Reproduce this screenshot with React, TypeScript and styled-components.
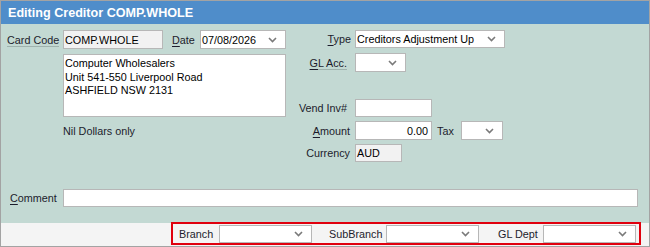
import React from 'react';
import styled, { createGlobalStyle } from 'styled-components';

const GlobalStyle = createGlobalStyle`
  html, body {
    margin: 0;
    padding: 0;
    background: #ffffff;
  }
  body {
    font-family: "Liberation Sans", Arial, sans-serif;
    font-size: 10.8px;
    color: #1b1b1b;
  }
`;

const Window = styled.div`
  width: 650px;
  height: 247px;
  box-sizing: border-box;
  border: 1px solid #a3a3a3;
  display: flex;
  flex-direction: column;
  overflow: hidden;
`;

const TitleBar = styled.div`
  height: 23px;
  flex: none;
  background: #4f8dca;
  color: #ffffff;
  font-weight: bold;
  font-size: 12.6px;
  display: flex;
  align-items: center;
  padding-left: 7px;
  padding-top: 1px;
  box-sizing: border-box;
`;

const Body = styled.div`
  height: 199px;
  flex: none;
  background: #c3d9d3;
  padding: 6px 0 0 5px;
  box-sizing: border-box;
  display: flex;
  flex-direction: column;
`;

const TopSection = styled.div`
  display: flex;
`;

const LeftColumn = styled.div`
  width: 280px;
  display: flex;
  flex-direction: column;
`;

const RightColumn = styled.div`
  margin-left: 11px;
  display: flex;
  flex-direction: column;
`;

interface RowProps {
  top?: number;
}

const Row = styled.div<RowProps>`
  display: flex;
  align-items: center;
  margin-top: ${(p) => p.top ?? 0}px;
`;

interface LabelProps {
  width?: number;
  right?: boolean;
  pad?: number;
  padRight?: number;
}

const Label = styled.span<LabelProps>`
  width: ${(p) => (p.width ? p.width + 'px' : 'auto')};
  flex: none;
  text-align: ${(p) => (p.right ? 'right' : 'left')};
  padding-left: ${(p) => p.pad ?? 0}px;
  padding-right: ${(p) => p.padRight ?? 0}px;
  box-sizing: border-box;
  white-space: nowrap;
  color: #1c1c2c;
  line-height: 14px;
`;

const LinkText = styled.span`
  border-bottom: 1px solid #9fb2ad;
`;

const Mnemonic = styled.u`
  text-decoration-thickness: 1px;
  text-underline-offset: 2px;
`;

interface BoxProps {
  w: number;
  h?: number;
  readOnly?: boolean;
  align?: 'left' | 'right';
}

const Box = styled.div<BoxProps>`
  width: ${(p) => p.w}px;
  height: ${(p) => p.h ?? 19}px;
  flex: none;
  box-sizing: border-box;
  border: 1px solid #b7b7b7;
  background: ${(p) => (p.readOnly ? '#f2f2f2' : '#ffffff')};
  display: flex;
  align-items: center;
  justify-content: ${(p) => (p.align === 'right' ? 'flex-end' : 'flex-start')};
  padding: 0 3px 0 1px;
  color: #000000;
  white-space: nowrap;
  overflow: hidden;
`;

const SelectBox = styled(Box)`
  justify-content: space-between;
  padding-right: 8px;
`;

const Memo = styled.div`
  margin-left: 57px;
  margin-top: 5px;
  width: 223px;
  height: 63px;
  box-sizing: border-box;
  border: 1px solid #b7b7b7;
  background: #ffffff;
  padding: 2px 1px;
  line-height: 13.5px;
  color: #000000;
`;

const AmountWords = styled.div`
  margin-left: 57px;
  margin-top: 7px;
  line-height: 14px;
  color: #1c1c2c;
`;

const CommentRow = styled(Row)`
  margin-top: 27px;
  padding-left: 4px;
`;

const Footer = styled.div`
  height: 23px;
  flex: none;
  background: #f4f4f4;
  display: flex;
  justify-content: flex-end;
  padding-right: 8px;
`;

const Highlight = styled.div`
  margin-top: -1px;
  height: 23px;
  box-sizing: border-box;
  border: 2px solid #e0000e;
  display: flex;
  align-items: center;
  padding: 0 3px 0 6px;
`;

const Chevron = () => (
  <svg width="9" height="6" viewBox="0 0 9 6" style={{ flex: 'none' }}>
    <polyline points="1,1 4.5,4.5 8,1" fill="none" stroke="#7a7a7a" strokeWidth="1.6" />
  </svg>
);

const Select: React.FC<{ w: number; h?: number; value?: string }> = ({ w, h, value }) => (
  <SelectBox w={w} h={h}>
    <span>{value ?? ''}</span>
    <Chevron />
  </SelectBox>
);

const App: React.FC = () => {
  return (
    <>
      <GlobalStyle />
      <Window>
        <TitleBar>Editing Creditor COMP.WHOLE</TitleBar>
        <Body>
          <TopSection>
            <LeftColumn>
              <Row>
                <Label width={57} pad={1}>
                  <LinkText>Card Code</LinkText>
                </Label>
                <Box w={100} readOnly>COMP.WHOLE</Box>
                <Label width={37} pad={9}>
                  <Mnemonic>D</Mnemonic>ate
                </Label>
                <Select w={86} value="07/08/2026" />
              </Row>
              <Memo>
                Computer Wholesalers
                <br />
                Unit 541-550 Liverpool Road
                <br />
                ASHFIELD NSW 2131
              </Memo>
              <AmountWords>Nil Dollars only</AmountWords>
            </LeftColumn>
            <RightColumn>
              <Row>
                <Label width={58} right padRight={4}>
                  <Mnemonic>T</Mnemonic>ype
                </Label>
                <Select w={150} h={18} value="Creditors Adjustment Up" />
              </Row>
              <Row top={5}>
                <Label width={58} right padRight={8}>
                  <LinkText>
                    <Mnemonic>G</Mnemonic>L Acc.
                  </LinkText>
                </Label>
                <Select w={51} />
              </Row>
              <Row top={27}>
                <Label width={58} right padRight={8}>
                  Vend Inv#
                </Label>
                <Box w={77} h={18} />
              </Row>
              <Row top={4}>
                <Label width={58} right padRight={5}>
                  <Mnemonic>A</Mnemonic>mount
                </Label>
                <Box w={77} align="right">0.00</Box>
                <Label width={29} pad={5}>Tax</Label>
                <Select w={42} />
              </Row>
              <Row top={4}>
                <Label width={58} right padRight={5}>
                  Currency
                </Label>
                <Box w={47} h={18} readOnly>AUD</Box>
              </Row>
            </RightColumn>
          </TopSection>
          <CommentRow>
            <Label width={53}>
              <Mnemonic>C</Mnemonic>omment
            </Label>
            <Box w={575} h={18} />
          </CommentRow>
        </Body>
        <Footer>
          <Highlight>
            <Label width={40}>Branch</Label>
            <Select w={93} h={18} />
            <Label width={74} pad={17}>SubBranch</Label>
            <Select w={93} h={18} />
            <Label width={64} pad={19}>GL Dept</Label>
            <Select w={93} h={18} />
          </Highlight>
        </Footer>
      </Window>
    </>
  );
};

export default App;
